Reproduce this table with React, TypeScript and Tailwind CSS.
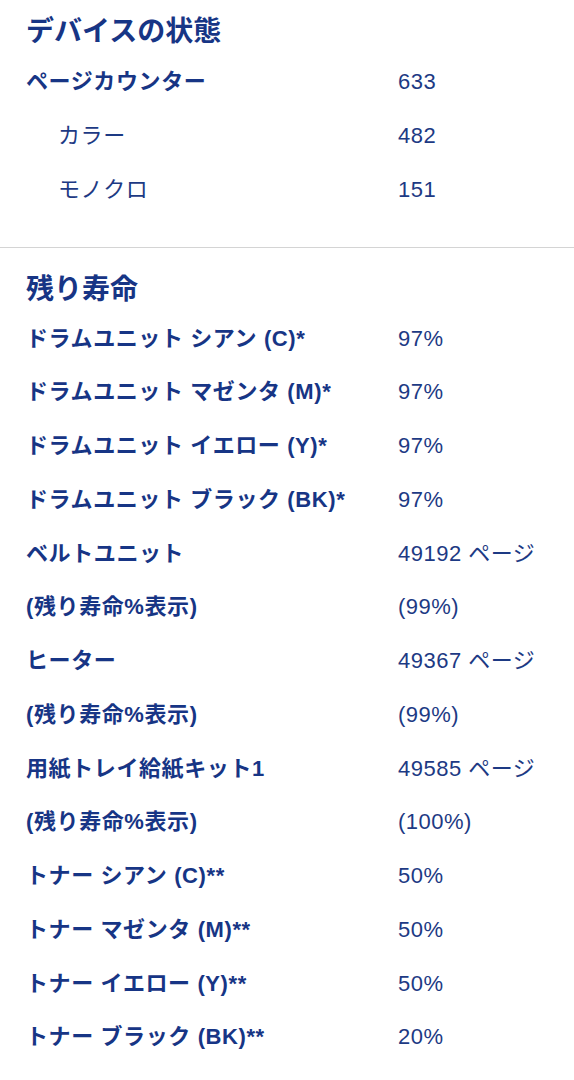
import React from "react";

type Row = { label: string; value: string; sub?: boolean };

const rows1: Row[] = [
  { label: "ページカウンター", value: "633" },
  { label: "カラー", value: "482", sub: true },
  { label: "モノクロ", value: "151", sub: true },
];

const rows2: Row[] = [
  { label: "ドラムユニット シアン (C)*", value: "97%" },
  { label: "ドラムユニット マゼンタ (M)*", value: "97%" },
  { label: "ドラムユニット イエロー (Y)*", value: "97%" },
  { label: "ドラムユニット ブラック (BK)*", value: "97%" },
  { label: "ベルトユニット", value: "49192 ページ" },
  { label: "(残り寿命%表示)", value: "(99%)" },
  { label: "ヒーター", value: "49367 ページ" },
  { label: "(残り寿命%表示)", value: "(99%)" },
  { label: "用紙トレイ給紙キット1", value: "49585 ページ" },
  { label: "(残り寿命%表示)", value: "(100%)" },
  { label: "トナー シアン (C)**", value: "50%" },
  { label: "トナー マゼンタ (M)**", value: "50%" },
  { label: "トナー イエロー (Y)**", value: "50%" },
  { label: "トナー ブラック (BK)**", value: "20%" },
];

function RowView({ r }: { r: Row }) {
  return (
    <div className="flex h-[53.75px] items-center">
      <div
        className={
          r.sub
            ? "w-[372px] shrink-0 whitespace-nowrap pl-[32px] text-[22px] font-normal tracking-[0.6px] text-[#1d3a84]"
            : "w-[372px] shrink-0 whitespace-nowrap text-[22px] font-bold tracking-[0.6px] text-[#173585]"
        }
      >
        {r.label}
      </div>
      <div className="whitespace-nowrap text-[22px] tracking-[0.5px] text-[#1d3a84]">{r.value}</div>
    </div>
  );
}

export default function App() {
  return (
    <div
      className="w-[574px] bg-white"
      style={{ fontFamily: '"Liberation Sans", "Noto Sans CJK JP", sans-serif' }}
    >
      <div className="pl-[26px] pt-[14px]">
        <div className="flex h-[36px] items-center text-[28px] font-bold text-[#173585]">
          デバイスの状態
        </div>
        <div className="mt-[5px]">
          {rows1.map((r, i) => (
            <RowView key={i} r={r} />
          ))}
        </div>
      </div>
      <div className="mt-[31px] h-px bg-[#d4d4d4]" />
      <div className="pl-[26px] pt-[24px] pb-[20px]">
        <div className="flex h-[36px] items-center text-[28px] font-bold text-[#173585]">
          残り寿命
        </div>
        <div className="mt-[3px]">
          {rows2.map((r, i) => (
            <RowView key={i} r={r} />
          ))}
        </div>
      </div>
    </div>
  );
}
